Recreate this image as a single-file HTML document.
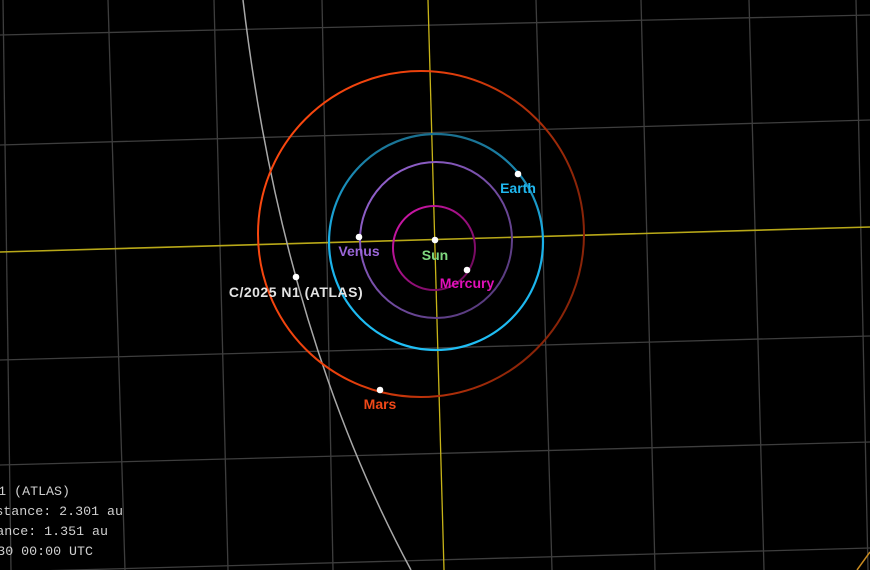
<!DOCTYPE html>
<html><head><meta charset="utf-8"><style>
html,body{margin:0;padding:0;background:#000;overflow:hidden}
svg{display:block}
</style></head><body>
<svg width="870" height="570" viewBox="0 0 870 570" xmlns="http://www.w3.org/2000/svg">
<defs>
<linearGradient id="gMars" x1="0" y1="0" x2="1" y2="0.3"><stop offset="0" stop-color="#ff4a10"/><stop offset="0.5" stop-color="#e8400c"/><stop offset="1" stop-color="#8a2408"/></linearGradient>
<linearGradient id="gEarth" x1="0" y1="0" x2="0" y2="1"><stop offset="0" stop-color="#1a7090"/><stop offset="0.5" stop-color="#1ab0e8"/><stop offset="1" stop-color="#20bff5"/></linearGradient>
<linearGradient id="gVenus" x1="0" y1="0" x2="1" y2="1"><stop offset="0" stop-color="#9a66d8"/><stop offset="1" stop-color="#4e3470"/></linearGradient>
<linearGradient id="gMerc" x1="0" y1="0" x2="1" y2="1"><stop offset="0" stop-color="#d818b0"/><stop offset="1" stop-color="#600850"/></linearGradient>
</defs>
<g stroke="#3e3e3e" stroke-width="1.3" fill="none">
<line x1="0" y1="35" x2="870" y2="15"/>
<line x1="0" y1="145" x2="870" y2="120"/>
<line x1="0" y1="360" x2="870" y2="336"/>
<line x1="0" y1="465" x2="870" y2="442"/>
<line x1="0" y1="572" x2="870" y2="548"/>
<line x1="3" y1="0" x2="11" y2="570"/>
<line x1="108" y1="0" x2="125" y2="570"/>
<line x1="214" y1="0" x2="228" y2="570"/>
<line x1="322" y1="0" x2="333" y2="570"/>
<line x1="536" y1="0" x2="552" y2="570"/>
<line x1="641" y1="0" x2="655" y2="570"/>
<line x1="749" y1="0" x2="764" y2="570"/>
<line x1="856" y1="0" x2="868" y2="570"/>
</g>
<line x1="857" y1="570" x2="870" y2="552" stroke="#c88a20" stroke-width="1.5"/>
<line x1="428" y1="0" x2="444" y2="570" stroke="#c8b418" stroke-width="1.3"/>
<line x1="0" y1="252" x2="870" y2="227" stroke="#b8a818" stroke-width="1.6"/>
<path d="M243,0 Q282,330 411,570" stroke="#a8a8a8" stroke-width="1.5" fill="none"/>
<ellipse cx="421" cy="234" rx="163" ry="163" fill="none" stroke="url(#gMars)" stroke-width="2"/>
<ellipse cx="436" cy="242" rx="107" ry="108" fill="none" stroke="url(#gEarth)" stroke-width="2.2"/>
<ellipse cx="436" cy="240" rx="76" ry="78" fill="none" stroke="url(#gVenus)" stroke-width="2"/>
<ellipse cx="434" cy="248" rx="41" ry="42" fill="none" stroke="url(#gMerc)" stroke-width="2"/>
<g fill="#fff">
<circle cx="435" cy="240" r="3.3"/>
<circle cx="518" cy="174" r="3.3"/>
<circle cx="359" cy="237" r="3.3"/>
<circle cx="467" cy="270" r="3.3"/>
<circle cx="380" cy="390" r="3.3"/>
<circle cx="296" cy="277" r="3.3"/>
</g>
<g font-family="Liberation Sans, sans-serif" font-weight="bold" font-size="14" text-anchor="middle">
<text x="518" y="193" fill="#20b8f0">Earth</text>
<text x="359" y="256" fill="#9a66d8">Venus</text>
<text x="435" y="260" fill="#80d880">Sun</text>
<text x="467" y="288" fill="#e010b8">Mercury</text>
<text x="380" y="409" fill="#f04818">Mars</text>
<text x="296" y="297" fill="#e4e4e4" letter-spacing="0.5">C/2025 N1 (ATLAS)</text>
</g>
<g font-family="Liberation Mono, monospace" font-size="13.3" fill="#d0d0d0" text-anchor="end">
<text x="70" y="495">N1 (ATLAS)</text>
<text x="123" y="515">Distance: 2.301 au</text>
<text x="108" y="535">distance: 1.351 au</text>
<text x="93" y="555">-07-30 00:00 UTC</text>
</g>
</svg>
</body></html>
